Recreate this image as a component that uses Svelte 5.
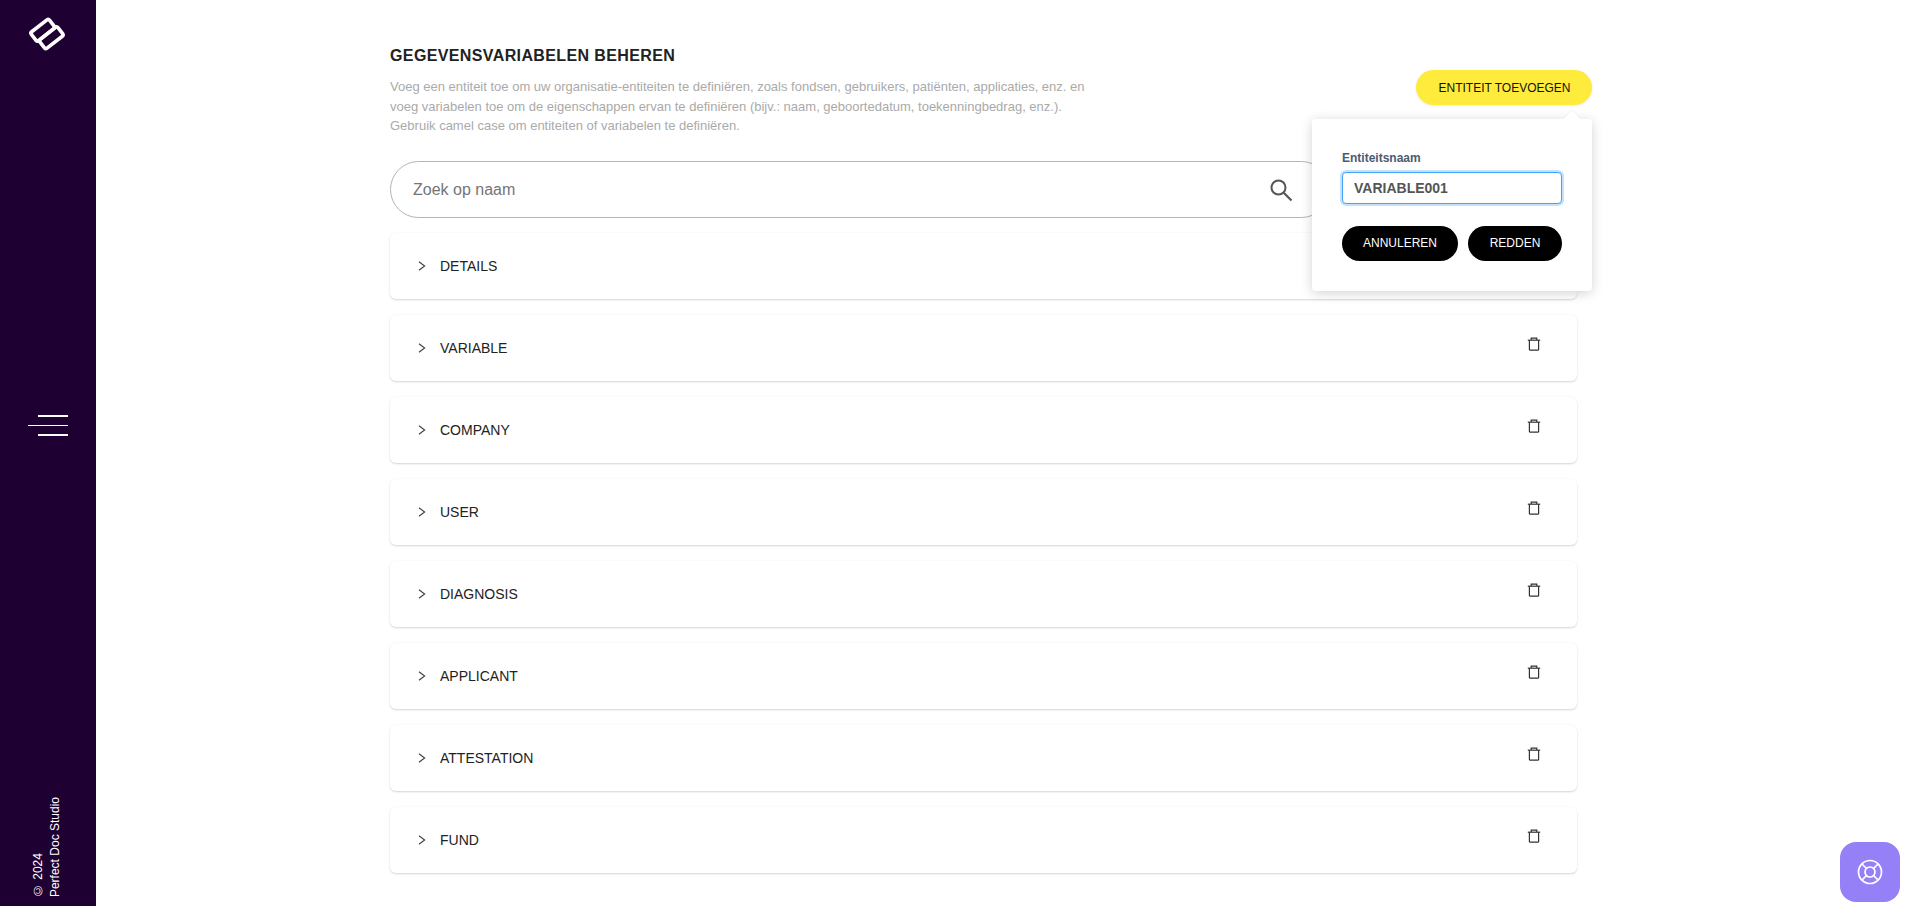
<script>
  const entities = ['DETAILS', 'VARIABLE', 'COMPANY', 'USER', 'DIAGNOSIS', 'APPLICANT', 'ATTESTATION', 'FUND'];
</script>

<div class="page">
  <aside class="sidebar">
    <svg class="logo" width="40" height="40" viewBox="0 0 40 40" fill="none" stroke="#fff" stroke-width="3.6">
      <g transform="rotate(-38 20 20)">
        <rect x="7.5" y="8.8" width="23" height="11.2" rx="1.8" />
        <rect x="9.5" y="20" width="23" height="11.2" rx="1.8" />
      </g>
    </svg>
    <button class="menu" aria-label="Menu">
      <span class="short"></span>
      <span></span>
      <span class="short"></span>
    </button>
    <div class="copyright">
      <span>© 2024</span>
      <span>Perfect Doc Studio</span>
    </div>
  </aside>

  <main class="main">
    <header class="head">
      <div class="intro">
        <h1>GEGEVENSVARIABELEN BEHEREN</h1>
        <p>Voeg een entiteit toe om uw organisatie-entiteiten te definiëren, zoals fondsen, gebruikers, patiënten, applicaties, enz. en voeg variabelen toe om de eigenschappen ervan te definiëren (bijv.: naam, geboortedatum, toekenningbedrag, enz.). Gebruik camel case om entiteiten of variabelen te definiëren.</p>
      </div>
      <div class="add-wrap">
        <button class="add">ENTITEIT TOEVOEGEN</button>
        <div class="popover">
          <label for="entity">Entiteitsnaam</label>
          <input id="entity" value="VARIABLE001" />
          <div class="actions">
            <button class="dark cancel">ANNULEREN</button>
            <button class="dark save">REDDEN</button>
          </div>
        </div>
      </div>
    </header>

    <div class="search">
      <span class="placeholder">Zoek op naam</span>
      <svg width="24" height="24" viewBox="0 0 24 24" fill="none" stroke="#555" stroke-width="2">
        <circle cx="9.5" cy="9.5" r="7" />
        <path d="M14.7 14.7 22.5 22.5" stroke-width="2.2" />
      </svg>
    </div>

    <ul class="list">
      {#each entities as name}
        <li class="card">
          <svg class="chev" width="8" height="10" viewBox="0 0 8 10" fill="none" stroke="#444" stroke-width="1.2">
            <path d="M1 .8 6.6 5 1 9.2" />
          </svg>
          <span class="name">{name}</span>
          <svg class="trash" width="14" height="14" viewBox="0 0 14 14" fill="none" stroke="#333" stroke-width="1.2">
            <path d="M.8 3.2h12.4" />
            <path d="M4.2 3V1.2h5.6V3" />
            <path d="M2.4 3.2v9.2c0 .5.3.8.8.8h7.6c.5 0 .8-.3.8-.8V3.2" />
          </svg>
        </li>
      {/each}
    </ul>
  </main>

  <button class="help" aria-label="Help">
    <svg width="26" height="26" viewBox="0 0 26 26" fill="none" stroke="#fff" stroke-width="1.7">
      <circle cx="13" cy="13" r="11.5" />
      <circle cx="13" cy="13" r="5" />
      <path d="M9.5 9.5 5 5M16.5 9.5 21 5M9.5 16.5 5 21M16.5 16.5 21 21" />
    </svg>
  </button>
</div>

<style>
  :global(body) {
    margin: 0;
    background: #fff;
    font-family: "Liberation Sans", Arial, sans-serif;
  }
  .page {
    display: flex;
    height: 906px;
    overflow: hidden;
  }
  .sidebar {
    flex: 0 0 96px;
    background: #1f0033;
    display: grid;
    grid-template-rows: 1fr auto 1fr;
    justify-items: center;
    box-sizing: border-box;
    padding: 14px 0 9px;
  }
  .logo {
    align-self: start;
    margin-left: -2px;
  }
  .menu {
    display: flex;
    flex-direction: column;
    align-items: flex-end;
    gap: 8px;
    width: 40px;
    padding: 0;
    margin: 0 0 60px;
    background: none;
    border: 0;
  }
  .menu span {
    display: block;
    width: 40px;
    height: 1.5px;
    background: #fff;
  }
  .menu .short {
    width: 30px;
  }
  .copyright {
    align-self: end;
    display: flex;
    flex-direction: column;
    gap: 3px;
    writing-mode: vertical-rl;
    transform: rotate(180deg);
    color: #fff;
    font-size: 12px;
    line-height: 14px;
    white-space: nowrap;
    margin-left: -3px;
  }
  .main {
    flex: 1;
    padding: 47px 0 0 294px;
  }
  .head {
    display: flex;
    justify-content: space-between;
    width: 1202px;
  }
  h1 {
    margin: 0 0 12px;
    font-size: 16px;
    line-height: 18px;
    font-weight: 700;
    letter-spacing: 0.38px;
    color: #222;
  }
  .intro p {
    margin: 0;
    width: 710px;
    font-size: 13px;
    line-height: 19.5px;
    font-weight: 400;
    color: #aaa;
  }
  .add-wrap {
    position: relative;
    padding-top: 23px;
  }
  button {
    font-family: inherit;
  }
  .add {
    width: 176px;
    height: 35px;
    border: 0;
    border-radius: 18px;
    background: #ffeb3b;
    color: #111;
    font-size: 12px;
    padding: 0 0 0 1px;
    box-shadow: 0 1px 3px rgba(0, 0, 0, 0.08);
  }
  .popover {
    position: absolute;
    top: 72px;
    right: 0;
    z-index: 2;
    width: 280px;
    height: 172px;
    box-sizing: border-box;
    padding: 32px 30px 0;
    background: #fff;
    border-radius: 4px;
    box-shadow: 0 2px 12px rgba(0, 0, 0, 0.18);
  }
  .popover::before {
    content: "";
    position: absolute;
    top: -6px;
    right: 14px;
    width: 12px;
    height: 12px;
    background: #fff;
    transform: rotate(45deg);
    box-shadow: -1px -1px 2px rgba(0, 0, 0, 0.03);
  }
  label {
    display: block;
    font-size: 12px;
    line-height: 14px;
    font-weight: 700;
    color: #4d5b70;
    margin-bottom: 7px;
    position: relative;
  }
  input {
    display: block;
    width: 220px;
    height: 32px;
    box-sizing: border-box;
    padding: 0 11px;
    border: 1px solid #45a3f5;
    border-radius: 4px;
    box-shadow: 0 0 0 2px #c5e2fd;
    outline: 0;
    font-family: inherit;
    font-size: 14px;
    font-weight: 700;
    color: #555;
  }
  .actions {
    display: flex;
    justify-content: space-between;
    margin-top: 22px;
  }
  .dark {
    height: 35px;
    border: 0;
    border-radius: 18px;
    background: #000;
    color: #fff;
    font-size: 12px;
    padding: 0 0 2px;
  }
  .cancel {
    width: 116px;
  }
  .save {
    width: 94px;
  }
  .search {
    display: flex;
    align-items: center;
    justify-content: space-between;
    box-sizing: border-box;
    width: 940px;
    height: 57px;
    margin-top: 25.5px;
    padding: 0 36px 0 22px;
    border: 1px solid #b5b5b5;
    border-radius: 28.5px;
  }
  .placeholder {
    font-size: 16px;
    color: #757575;
  }
  .list {
    list-style: none;
    margin: 15px 0 0;
    padding: 0;
    width: 1187px;
    display: flex;
    flex-direction: column;
    gap: 16px;
  }
  .card {
    display: flex;
    align-items: center;
    height: 66px;
    box-sizing: border-box;
    padding: 0 36px 0 28px;
    border-radius: 6px;
    background: #fff;
    box-shadow: 0 1px 2px rgba(0, 0, 0, 0.16), 0 0 4px rgba(0, 0, 0, 0.02);
  }
  .chev {
    flex: none;
  }
  .name {
    margin-left: 14px;
    font-size: 14px;
    color: #222;
  }
  .trash {
    margin-left: auto;
    margin-top: -8px;
  }
  .help {
    position: fixed;
    right: 17px;
    bottom: 4px;
    width: 60px;
    height: 60px;
    padding: 0;
    display: flex;
    align-items: center;
    justify-content: center;
    border: 0;
    border-radius: 16px;
    background: #9580f8;
  }
</style>
